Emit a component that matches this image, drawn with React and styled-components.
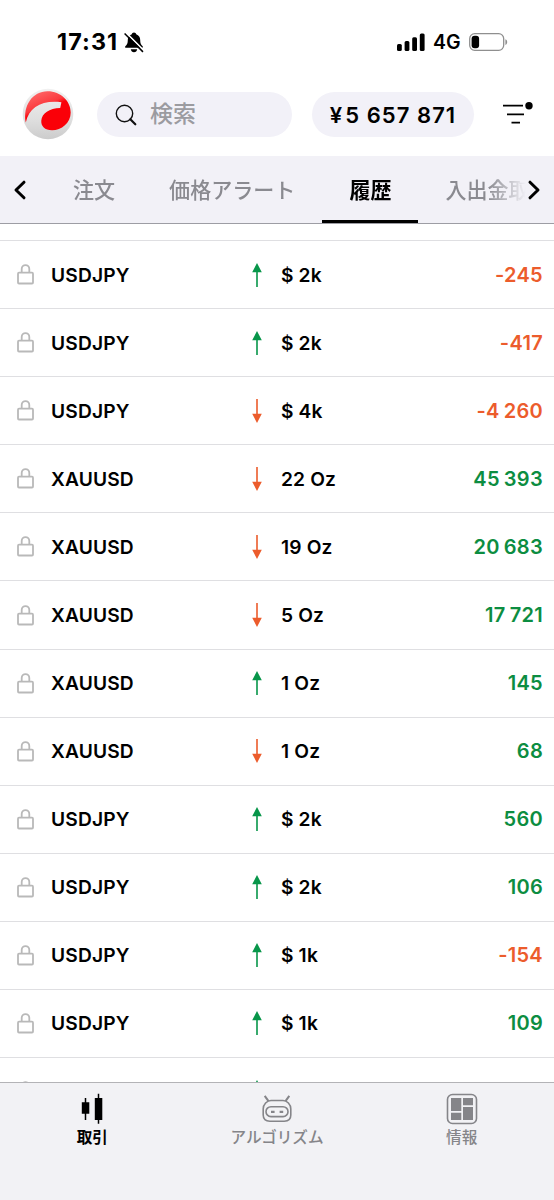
import React, { useState } from 'react';
import styled, { createGlobalStyle } from 'styled-components';

const GlobalStyle = createGlobalStyle`
  * {
    box-sizing: border-box;
  }

  body {
    margin: 0;
    background: #ffffff;
    font-family: Inter, "Noto Sans CJK JP", sans-serif;
    color: #000000;
    -webkit-font-smoothing: antialiased;
  }
`;

const Screen = styled.div`
  width: 554px;
  height: 1200px;
  display: flex;
  flex-direction: column;
  overflow: hidden;
  background: #ffffff;
`;

const StatusBar = styled.div`
  height: 84px;
  flex: none;
  display: flex;
  justify-content: space-between;
  padding: 30px 46px 30px 57px;
`;

const StatusGroup = styled.div`
  display: flex;
  align-items: center;
  height: 24px;
`;

const Clock = styled.span`
  width: 67px;
  font-size: 23.3px;
  font-weight: 700;
  letter-spacing: 1.1px;
  line-height: 24px;
  white-space: nowrap;
`;

const Network = styled.span`
  width: 36px;
  margin-left: 8px;
  font-size: 19.5px;
  font-weight: 600;
  line-height: 24px;
`;

const Header = styled.header`
  height: 72px;
  flex: none;
  display: flex;
  align-items: flex-start;
  padding: 4px 20px 0 22px;
`;

const SearchBox = styled.div`
  display: flex;
  align-items: center;
  width: 195px;
  height: 45px;
  margin: 4px 20px 0 23px;
  padding-left: 18px;
  border-radius: 23px;
  background: #f2f1f8;
`;

const Placeholder = styled.span`
  margin-left: 13px;
  font-size: 23px;
  font-weight: 500;
  line-height: 45px;
  color: #9b9ba0;
`;

const Balance = styled.div`
  display: flex;
  align-items: center;
  justify-content: center;
  width: 162px;
  height: 45px;
  margin: 4px 28px 0 0;
  border-radius: 23px;
  background: #f2f1f8;
  font-size: 22px;
  font-weight: 600;
  letter-spacing: 1.05px;
  white-space: nowrap;
`;

const YenSign = styled.span`
  margin-right: 2px;
`;

const FilterButton = styled.div`
  margin-top: 12px;
  height: 30px;
`;

const TabBar = styled.nav`
  display: flex;
  align-items: stretch;
  flex: none;
  height: 68px;
  border-bottom: 1px solid #9d9da4;
  background: #f2f1f7;
`;

const TabArrow = styled.div`
  display: flex;
  align-items: center;
  justify-content: center;
  width: 40px;
  flex: none;
`;

const TabScroller = styled.div`
  display: flex;
  flex: 1;
  min-width: 0;
  overflow: hidden;
  padding-left: 6px;
  margin-right: -12px;
  mask-image: linear-gradient(to right, #000 calc(100% - 38px), transparent 100%);
`;

const Tab = styled.div`
  flex: none;
  height: 67px;
  padding: 2px 27px 0;
  border-bottom: 3px solid ${props => (props.$active ? '#000000' : 'transparent')};
  font-size: 21.05px;
  font-weight: ${props => (props.$active ? 700 : 500)};
  line-height: 66px;
  color: ${props => (props.$active ? '#000000' : '#8a8a90')};
  white-space: nowrap;
  cursor: pointer;
`;

const DealList = styled.div`
  flex: 1;
  min-height: 0;
  overflow: hidden;
  padding-top: 16.1px;
`;

const DealRow = styled.div`
  display: flex;
  align-items: center;
  height: 68.08px;
  padding: 0 11px 0 17px;
  border-top: 1px solid #dfdfe2;
  font-size: 19.2px;
  font-weight: 600;
`;

const Symbol = styled.div`
  width: 200px;
  margin-left: 17px;
  letter-spacing: 0.15px;
`;

const Volume = styled.div`
  margin-left: 18px;
  letter-spacing: 0.15px;
`;

const Profit = styled.div`
  margin-left: auto;
  font-size: 20px;
  letter-spacing: 0.3px;
  word-spacing: -1.3px;
  color: ${props => (props.$loss ? '#ec5c2c' : '#0c8d41')};
`;

const BottomBar = styled.footer`
  display: grid;
  grid-template-columns: repeat(3, 1fr);
  flex: none;
  height: 118px;
  border-top: 1px solid #b3b3b6;
  background: #f2f2f5;
`;

const NavItem = styled.div`
  display: flex;
  flex-direction: column;
  align-items: center;
  padding-top: 10px;
  color: ${props => (props.$active ? '#000000' : '#858589')};
`;

const NavLabel = styled.span`
  margin-top: 1px;
  font-size: 15.6px;
  font-weight: ${props => (props.$active ? 700 : 500)};
  line-height: 24px;
`;

const BellOff = () => (
  <svg width="20" height="21" viewBox="0 0 20 21">
    <path d="M10 0.5c1.2 0 2 .8 2.2 1.8 2.6.9 4 3 4 5.8 0 3.6.8 4.6 2.2 5.8.8.7.5 1.9-.6 1.9H2.2c-1.2 0-1.5-1.2-.6-1.9C3 12.7 3.8 11.7 3.8 8.1c0-2.8 1.4-4.9 4-5.8C8 1.3 8.8 .5 10 .5z" />
    <path d="M6.8 17.2h6.4c-.3 1.8-1.5 3-3.2 3s-2.9-1.2-3.2-3z" />
    <path d="M1.8 .5L20 18.7" stroke="#fff" strokeWidth="1.7" />
    <path d="M.6 1.5L19 19.9" stroke="#000" strokeWidth="1.5" />
  </svg>
);

const Signal = () => (
  <svg width="28" height="18" viewBox="0 0 28 18">
    <rect x="0" y="11" width="4.8" height="7" rx="1.5" />
    <rect x="7.6" y="8" width="4.8" height="10" rx="1.5" />
    <rect x="15.2" y="4.2" width="4.8" height="13.8" rx="1.5" />
    <rect x="22.8" y="0.5" width="4.8" height="17.5" rx="1.5" />
  </svg>
);

const Battery = () => (
  <svg width="39" height="18" viewBox="0 0 39 18">
    <rect x="0.7" y="0.7" width="34" height="16.6" rx="5" fill="none" stroke="#8f8f8f" strokeWidth="1.3" />
    <rect x="2.6" y="2.8" width="7.5" height="12.5" rx="3" />
    <path d="M36.4 6.2c2.4.7 2.4 5 0 5.7z" fill="#8f8f8f" />
  </svg>
);

const Logo = () => (
  <svg width="52" height="52" viewBox="0 0 52 52">
    <defs>
      <linearGradient id="ball" x1="0" y1="0" x2="0" y2="1">
        <stop offset="0" stopColor="#f1f1f1" />
        <stop offset="0.6" stopColor="#dfdfdf" />
        <stop offset="1" stopColor="#cccccc" />
      </linearGradient>
      <linearGradient id="gloss" x1="0" y1="0" x2="0.5" y2="1">
        <stop offset="0" stopColor="#ff7474" />
        <stop offset="0.45" stopColor="#fb3a3e" />
        <stop offset="0.55" stopColor="#fa0008" />
      </linearGradient>
    </defs>
    <circle cx="26" cy="26" r="25.3" fill="url(#ball)" />
    <path
      d="M3.8 34.5C0.5 18 10.5 3.3 25.5 3.3c13.5 0 23.2 10 23.2 21.2C48.7 35 39.5 42.3 30 42.3c-7.2 0-11.2-4-10.7-9.7.6-7.3 8-12.3 18.9-12.6l1.2-5.8C20 12 7 19 3.8 34.5z"
      fill="url(#gloss)"
    />
  </svg>
);

const SearchIcon = () => (
  <svg width="22" height="22" viewBox="0 0 22 22" fill="none" stroke="#111">
    <circle cx="9.5" cy="9.5" r="8.2" strokeWidth="1.4" />
    <path d="M15.3 15.3L20.3 20.3" strokeWidth="2.2" strokeLinecap="round" />
  </svg>
);

const FilterIcon = () => (
  <svg width="32" height="30" viewBox="0 0 32 30">
    <path d="M1 5.7h20M5 14.3h17M9.5 22.7h8.5" stroke="#000" strokeWidth="1.7" />
    <circle cx="27" cy="5.8" r="3.7" />
  </svg>
);

const Chevron = ({ right }) => (
  <svg width="14" height="20" viewBox="0 0 14 20" fill="none" stroke="#000" strokeWidth="3" strokeLinecap="round" strokeLinejoin="round">
    <path d={right ? 'M3 2.2L11 10L3 17.8' : 'M11 2.2L3 10L11 17.8'} />
  </svg>
);

const Lock = () => (
  <svg width="17" height="21" viewBox="0 0 17 21" fill="none" stroke="#b9b9b9" strokeWidth="1.8">
    <rect x="1" y="8.7" width="15" height="10.8" rx="1" />
    <path d="M4.7 8.7V4.9a3.8 3.8 0 0 1 7.6 0v3.8" />
  </svg>
);

const Arrow = ({ up }) => (
  <svg width="12" height="24" viewBox="0 0 12 24" fill={up ? '#08964a' : '#ec5c2c'}>
    {up ? <path d="M6 0L10.8 9.2H6.8V24H5.2V9.2H1.2z" /> : <path d="M6 24L10.8 14.8H6.8V0H5.2V14.8H1.2z" />}
  </svg>
);

const CandlesIcon = () => (
  <svg width="32" height="32" viewBox="0 0 32 32">
    <path d="M9.5 5v22M22.5 .8v30" stroke="#000" strokeWidth="1.5" />
    <path d="M5.8 9.2h7.5v11.5H5.8zM18.8 5h7.5v22h-7.5z" />
  </svg>
);

const RobotIcon = () => (
  <svg width="32" height="32" viewBox="0 0 32 32" fill="none" stroke="currentColor" strokeWidth="1.6">
    <path d="M10 7.5h12c4 0 7.8 4 7.8 8.5v6c0 4-2.5 6.2-6.5 6.2H8.7c-4 0-6.5-2.2-6.5-6.2v-6c0-4.5 3.8-8.5 7.8-8.5z" />
    <rect x="5" y="13.7" width="22" height="9.9" rx="4.95" />
    <path d="M10 18.8h3.6M18.6 18.8h3.6" strokeWidth="2.2" />
    <path d="M7.5 8.2L3.7 2.8M24.5 8.2L28.3 2.8" strokeWidth="2" />
  </svg>
);

const InfoIcon = () => (
  <svg width="32" height="32" viewBox="0 0 32 32">
    <rect x="1.5" y="1.5" width="29" height="29" rx="5" fill="none" stroke="currentColor" strokeWidth="1.6" />
    <path d="M5 5h10.300v13H5zM17 5h10v7.3H17zM5 19.8h10.300V27H5zM17 14h10v13H17z" fill="currentColor" />
  </svg>
);

const tabs = ['注文', '価格アラート', '履歴', '入出金取'];

const deals = [
  { symbol: 'USDJPY', up: true, volume: '$ 2k', profit: '-245' },
  { symbol: 'USDJPY', up: true, volume: '$ 2k', profit: '-417' },
  { symbol: 'USDJPY', up: false, volume: '$ 4k', profit: '-4 260' },
  { symbol: 'XAUUSD', up: false, volume: '22 Oz', profit: '45 393' },
  { symbol: 'XAUUSD', up: false, volume: '19 Oz', profit: '20 683' },
  { symbol: 'XAUUSD', up: false, volume: '5 Oz', profit: '17 721' },
  { symbol: 'XAUUSD', up: true, volume: '1 Oz', profit: '145' },
  { symbol: 'XAUUSD', up: false, volume: '1 Oz', profit: '68' },
  { symbol: 'USDJPY', up: true, volume: '$ 2k', profit: '560' },
  { symbol: 'USDJPY', up: true, volume: '$ 2k', profit: '106' },
  { symbol: 'USDJPY', up: true, volume: '$ 1k', profit: '-154' },
  { symbol: 'USDJPY', up: true, volume: '$ 1k', profit: '109' },
  // next row, only its icons peek out above the bottom bar
  { symbol: '', up: true, volume: '', profit: '' },
];

function App() {
  const [activeTab, setActiveTab] = useState('履歴');

  return (
    <Screen>
      <GlobalStyle />
      <StatusBar>
        <StatusGroup>
          <Clock>17:31</Clock>
          <BellOff />
        </StatusGroup>
        <StatusGroup>
          <Signal />
          <Network>4G</Network>
          <Battery />
        </StatusGroup>
      </StatusBar>

      <Header>
        <Logo />
        <SearchBox>
          <SearchIcon />
          <Placeholder>検索</Placeholder>
        </SearchBox>
        <Balance><YenSign>¥</YenSign>5 657 871</Balance>
        <FilterButton>
          <FilterIcon />
        </FilterButton>
      </Header>

      <TabBar>
        <TabArrow><Chevron /></TabArrow>
        <TabScroller>
          {tabs.map((tab) => (
            <Tab key={tab} $active={tab === activeTab} onClick={() => setActiveTab(tab)}>{tab}</Tab>
          ))}
        </TabScroller>
        <TabArrow><Chevron right /></TabArrow>
      </TabBar>

      <DealList>
        {deals.map((deal, index) => (
          <DealRow key={index}>
            <Lock />
            <Symbol>{deal.symbol}</Symbol>
            <Arrow up={deal.up} />
            <Volume>{deal.volume}</Volume>
            <Profit $loss={deal.profit.startsWith('-')}>{deal.profit}</Profit>
          </DealRow>
        ))}
      </DealList>

      <BottomBar>
        <NavItem $active>
          <CandlesIcon />
          <NavLabel $active>取引</NavLabel>
        </NavItem>
        <NavItem>
          <RobotIcon />
          <NavLabel>アルゴリズム</NavLabel>
        </NavItem>
        <NavItem>
          <InfoIcon />
          <NavLabel>情報</NavLabel>
        </NavItem>
      </BottomBar>
    </Screen>
  );
}

export default App;
